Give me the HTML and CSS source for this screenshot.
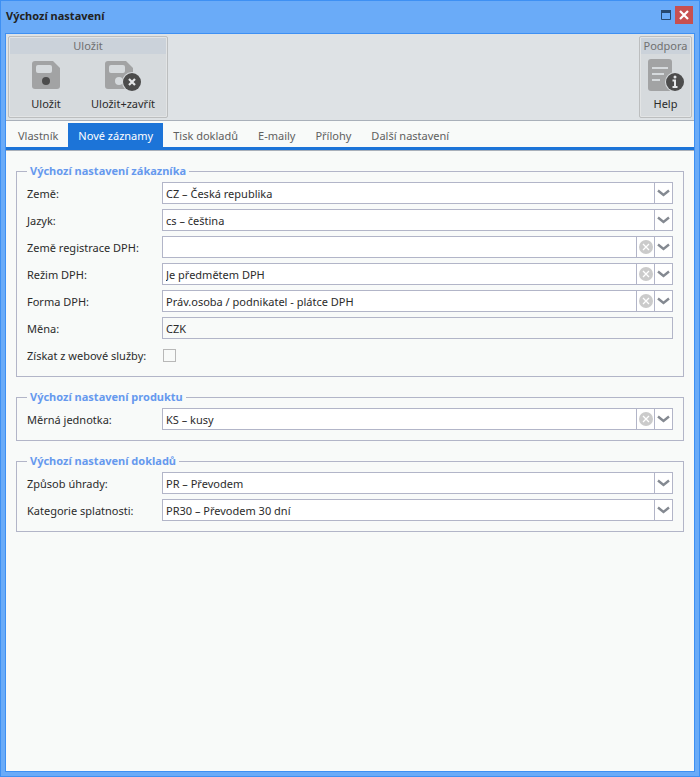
FILE: index.html
```html
<!DOCTYPE html>
<html lang="cs">
<head>
    <meta charset="UTF-8">
    <meta name="viewport" content="width=device-width, initial-scale=1.0">
    <title>Výchozí nastavení</title>
    <link rel="stylesheet" href="styles.css">
</head>
<body>

    <!-- Shared icons -->
    <svg class="icon-defs" width="0" height="0" aria-hidden="true">
        <symbol id="chevron" viewBox="0 0 17 20">
            <path d="M3 7.500 L8.500 12 L14 7.500" fill="none" stroke="#848991" stroke-width="2.400"/>
        </symbol>
        <symbol id="clear" viewBox="0 0 14 14">
            <circle cx="7" cy="7" r="7" fill="#cbcbcb"/>
            <path d="M4 4 L10 10 M10 4 L4 10" stroke="#fff" stroke-width="1.300"/>
        </symbol>
    </svg>

    <div class="window">
        <header class="titlebar">
            <h1>Výchozí nastavení</h1>
            <button type="button" class="maximize" aria-label="Maximalizovat">
                <svg width="10" height="10" viewBox="0 0 10 10">
                    <path d="M0.500 0.500 H9.500 V9.500 H0.500 Z" fill="none" stroke="#26486f"/>
                    <path d="M0 0 H10 V3 H0 Z" fill="#26486f"/>
                </svg>
            </button>
            <button type="button" class="close" aria-label="Zavřít">
                <svg width="18" height="18" viewBox="0 0 18 18">
                    <path d="M5 5 L13 13 M13 5 L5 13" stroke="#fff" stroke-width="2.200"/>
                </svg>
            </button>
        </header>

        <main class="panel">
            <div class="toolbar">
                <section class="group">
                    <h2>Uložit</h2>
                    <div class="actions">
                        <button type="button" class="action">
                            <svg width="36" height="34" viewBox="0 0 36 34">
                                <path d="M7 3 H25 L32 10 V28 Q32 31 29 31 H7 Q4 31 4 28 V6 Q4 3 7 3 Z" fill="#a2a3a4"/>
                                <rect x="8" y="7" width="16" height="8" rx="2" fill="#d6dadd"/>
                                <circle cx="18" cy="23" r="4" fill="#4c4c4c"/>
                            </svg>
                            <span>Uložit</span>
                        </button>
                        <button type="button" class="action">
                            <svg width="36" height="34" viewBox="0 0 36 34">
                                <path d="M3 3 H21 L28 10 V28 Q28 31 25 31 H3 Q0 31 0 28 V6 Q0 3 3 3 Z" fill="#a2a3a4"/>
                                <rect x="4" y="7" width="16" height="8" rx="2" fill="#d6dadd"/>
                                <circle cx="14" cy="23" r="4" fill="#d6dadd"/>
                                <circle cx="27" cy="24" r="10" fill="#d6dadd"/>
                                <circle cx="27" cy="24" r="9" fill="#4c4c4c"/>
                                <path d="M24 21 L30 27 M30 21 L24 27" stroke="#e4e6e8" stroke-width="2.200"/>
                            </svg>
                            <span>Uložit+zavřít</span>
                        </button>
                    </div>
                </section>
                <section class="group">
                    <h2>Podpora</h2>
                    <div class="actions">
                        <button type="button" class="action help">
                            <svg width="38" height="34" viewBox="0 0 38 34">
                                <rect x="1" y="1" width="24" height="32" rx="3" fill="#a2a3a4"/>
                                <path d="M5 10 H21 M5 16 H17 M5 22 H13" stroke="#d6dadd" stroke-width="2"/>
                                <circle cx="28" cy="24" r="10" fill="#d6dadd"/>
                                <circle cx="28" cy="24" r="9" fill="#4c4c4c"/>
                                <circle cx="28" cy="19" r="1.500" fill="#e4e6e8"/>
                                <path d="M25.500 22.500 H28 V28.500 M25.500 29 H30.500" fill="none" stroke="#e4e6e8" stroke-width="2"/>
                            </svg>
                            <span>Help</span>
                        </button>
                    </div>
                </section>
            </div>

            <nav class="tabs">
                <a href="#vlastnik">Vlastník</a>
                <a href="#zaznamy" class="active">Nové záznamy</a>
                <a href="#tisk">Tisk dokladů</a>
                <a href="#emaily">E-maily</a>
                <a href="#prilohy">Přílohy</a>
                <a href="#dalsi">Další nastavení</a>
            </nav>

            <form class="settings" id="zaznamy">
                <fieldset>
                    <legend>Výchozí nastavení zákazníka</legend>
                    <div class="row">
                        <label for="zeme">Země:</label>
                        <div class="combo">
                            <select id="zeme"><option>CZ – Česká republika</option></select>
                            <svg class="arrow"><use href="#chevron"/></svg>
                        </div>
                    </div>
                    <div class="row">
                        <label for="jazyk">Jazyk:</label>
                        <div class="combo">
                            <select id="jazyk"><option>cs – čeština</option></select>
                            <svg class="arrow"><use href="#chevron"/></svg>
                        </div>
                    </div>
                    <div class="row">
                        <label for="registrace">Země registrace DPH:</label>
                        <div class="combo">
                            <select id="registrace"><option></option></select>
                            <button type="button" class="clear" aria-label="Vymazat"><svg width="14" height="14"><use href="#clear"/></svg></button>
                            <svg class="arrow"><use href="#chevron"/></svg>
                        </div>
                    </div>
                    <div class="row">
                        <label for="rezim">Režim DPH:</label>
                        <div class="combo">
                            <select id="rezim"><option>Je předmětem DPH</option></select>
                            <button type="button" class="clear" aria-label="Vymazat"><svg width="14" height="14"><use href="#clear"/></svg></button>
                            <svg class="arrow"><use href="#chevron"/></svg>
                        </div>
                    </div>
                    <div class="row">
                        <label for="forma">Forma DPH:</label>
                        <div class="combo">
                            <select id="forma"><option>Práv.osoba / podnikatel - plátce DPH</option></select>
                            <button type="button" class="clear" aria-label="Vymazat"><svg width="14" height="14"><use href="#clear"/></svg></button>
                            <svg class="arrow"><use href="#chevron"/></svg>
                        </div>
                    </div>
                    <div class="row">
                        <label for="mena">Měna:</label>
                        <input type="text" id="mena" value="CZK" readonly>
                    </div>
                    <div class="row">
                        <label for="sluzba">Získat z webové služby:</label>
                        <input type="checkbox" id="sluzba">
                    </div>
                </fieldset>

                <fieldset>
                    <legend>Výchozí nastavení produktu</legend>
                    <div class="row">
                        <label for="jednotka">Měrná jednotka:</label>
                        <div class="combo">
                            <select id="jednotka"><option>KS – kusy</option></select>
                            <button type="button" class="clear" aria-label="Vymazat"><svg width="14" height="14"><use href="#clear"/></svg></button>
                            <svg class="arrow"><use href="#chevron"/></svg>
                        </div>
                    </div>
                </fieldset>

                <fieldset>
                    <legend>Výchozí nastavení dokladů</legend>
                    <div class="row">
                        <label for="uhrada">Způsob úhrady:</label>
                        <div class="combo">
                            <select id="uhrada"><option>PR – Převodem</option></select>
                            <svg class="arrow"><use href="#chevron"/></svg>
                        </div>
                    </div>
                    <div class="row">
                        <label for="splatnost">Kategorie splatnosti:</label>
                        <div class="combo">
                            <select id="splatnost"><option>PR30 – Převodem 30 dní</option></select>
                            <svg class="arrow"><use href="#chevron"/></svg>
                        </div>
                    </div>
                </fieldset>
            </form>
        </main>
    </div>

</body>
</html>
```
FILE: styles.css
```css
* {
    margin: 0;
    padding: 0;
    box-sizing: border-box;
}

body {
    font-family: "Noto Sans", "Open Sans", sans-serif;
    font-size: 11px;
    line-height: 16px;
    color: #2b2b2b;
}

button, select, input {
    font: inherit;
    color: inherit;
}

button {
    border: none;
    background: none;
    cursor: pointer;
}

svg {
    display: block;
}

.icon-defs {
    position: absolute;
}

/* Window frame */
.window {
    display: flex;
    flex-direction: column;
    min-height: 100vh;
    padding: 0 4px 4px;
    border: 1px solid #3e90f3;
    background: #6aabf8;
}

.titlebar {
    display: flex;
    align-items: center;
    gap: 4px;
    height: 32px;
    padding: 0 2px 4px 1px;
}

.titlebar h1 {
    flex: 1;
    padding-top: 2px;
    font-size: 11px;
    color: #222;
}

.close {
    background: #c75050;
}

.panel {
    flex: 1;
    display: flex;
    flex-direction: column;
    border: 1px solid #3e90f3;
    background: #f8faf9;
}

/* Toolbar */
.toolbar {
    display: flex;
    justify-content: space-between;
    padding: 2px;
    border-bottom: 1px solid #a9b0ba;
    background: #dee2e5;
}

.group {
    padding: 1px;
    border: 1px solid #bcbebf;
    border-radius: 2px;
    background: #d6dadd;
    box-shadow: inset 0 0 0 1px #e2e4e5;
}

.group h2 {
    height: 16px;
    background: #cbd2da;
    font-size: 11px;
    font-weight: normal;
    text-align: center;
    color: #707070;
}

.actions {
    display: flex;
    justify-content: center;
    height: 62px;
    padding: 0 1px;
}

.action {
    display: flex;
    flex-direction: column;
    align-items: center;
    gap: 2px;
    min-width: 70px;
    padding: 4px 10px 0;
}

.action span {
    line-height: 20px;
}

.help {
    min-width: 47px;
    padding: 4px 4px 0;
}

/* Tabs */
.tabs {
    display: flex;
    padding: 2px 2px 0;
    border-bottom: 3px solid #1c74d8;
}

.tabs a {
    padding: 5px 10px 3px;
    color: #606060;
    text-decoration: none;
}

.tabs .active {
    background: #1c74d8;
    color: #fff;
}

/* Settings form */
.settings {
    flex: 1;
    display: flex;
    flex-direction: column;
    gap: 12px;
    padding: 12px 10px;
    border-top: 1px solid #a9b0ba;
}

fieldset {
    display: flex;
    flex-direction: column;
    gap: 5px;
    padding: 3px 10px 10px;
    border: 1px solid #b2b5c8;
}

legend {
    padding: 0 3px;
    font-weight: bold;
    color: #6699ee;
}

.row {
    display: grid;
    grid-template-columns: 135px 1fr;
    align-items: center;
    height: 22px;
}

.row label {
    padding-top: 2px;
}

.combo {
    position: relative;
    height: 22px;
}

.combo select,
.row input[type="text"] {
    width: 100%;
    height: 22px;
    padding: 2px 3px 0;
    border: 1px solid #b2b5c8;
    border-radius: 0;
    background: #fff;
    appearance: none;
    outline: none;
}

.row input[type="text"] {
    padding-top: 0;
    background: transparent;
}

.arrow {
    position: absolute;
    top: 1px;
    right: 1px;
    width: 18px;
    height: 20px;
    border-left: 1px solid #b2b5c8;
    pointer-events: none;
}

.clear {
    position: absolute;
    top: 1px;
    right: 19px;
    display: flex;
    align-items: center;
    justify-content: center;
    width: 18px;
    height: 20px;
    border-left: 1px solid #b2b5c8;
}

.row input[type="checkbox"] {
    width: 13px;
    height: 13px;
    margin-left: 1px;
    border: 1px solid #b8b8b8;
    appearance: none;
}

.row input[type="checkbox"]:checked {
    background: #1c74d8;
}
```
